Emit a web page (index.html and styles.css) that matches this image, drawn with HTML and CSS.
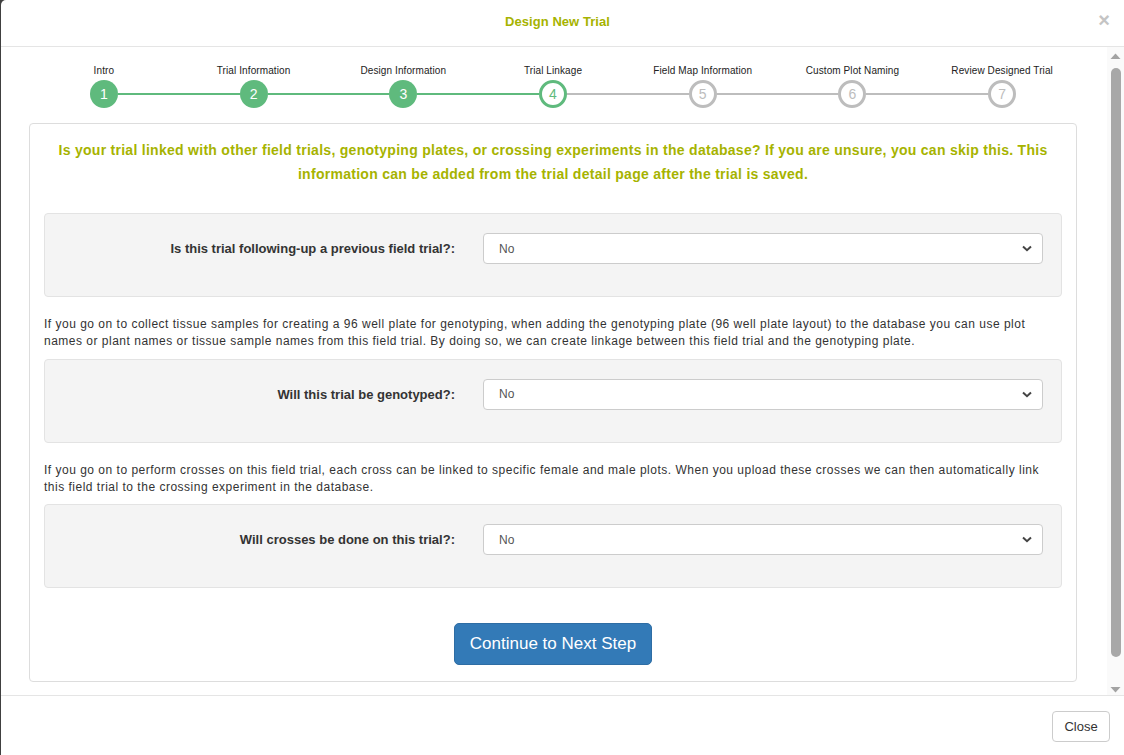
FILE: index.html
```html
<!DOCTYPE html>
<html>
<head>
<meta charset="utf-8">
<link rel="stylesheet" href="styles.css">
</head>
<body>
<div class="modal">
  <div class="modal-header">
    <div class="modal-title">Design New Trial</div>
    <span class="close-x">×</span>
  </div>
  <div class="modal-main">
    <div class="modal-body">
      <div class="stepper">
        <div class="step done"><div class="step-label">Intro</div><div class="step-track"><span class="ln ln-none"></span><span class="circle">1</span><span class="ln ln-green"></span></div></div>
        <div class="step done"><div class="step-label">Trial Information</div><div class="step-track"><span class="ln ln-green"></span><span class="circle">2</span><span class="ln ln-green"></span></div></div>
        <div class="step done"><div class="step-label">Design Information</div><div class="step-track"><span class="ln ln-green"></span><span class="circle">3</span><span class="ln ln-green"></span></div></div>
        <div class="step current"><div class="step-label">Trial Linkage</div><div class="step-track"><span class="ln ln-green"></span><span class="circle">4</span><span class="ln ln-grey"></span></div></div>
        <div class="step todo"><div class="step-label">Field Map Information</div><div class="step-track"><span class="ln ln-grey"></span><span class="circle">5</span><span class="ln ln-grey"></span></div></div>
        <div class="step todo"><div class="step-label">Custom Plot Naming</div><div class="step-track"><span class="ln ln-grey"></span><span class="circle">6</span><span class="ln ln-grey"></span></div></div>
        <div class="step todo"><div class="step-label">Review Designed Trial</div><div class="step-track"><span class="ln ln-grey"></span><span class="circle">7</span><span class="ln ln-none"></span></div></div>
      </div>

      <div class="panel">
        <p class="headline">Is your trial linked with other field trials, genotyping plates, or crossing experiments in the database? If you are unsure, you can skip this. This information can be added from the trial detail page after the trial is saved.</p>

        <div class="well">
          <label class="q-label">Is this trial following-up a previous field trial?:</label>
          <div class="select"><span>No</span><svg width="10" height="7" viewBox="0 0 10 7"><path d="M1 1.5 L5 5.2 L9 1.5" fill="none" stroke="#444" stroke-width="2"/></svg></div>
        </div>

        <p class="info">If you go on to collect tissue samples for creating a 96 well plate for genotyping, when adding the genotyping plate (96 well plate layout) to the database you can use plot names or plant names or tissue sample names from this field trial. By doing so, we can create linkage between this field trial and the genotyping plate.</p>

        <div class="well">
          <label class="q-label">Will this trial be genotyped?:</label>
          <div class="select"><span>No</span><svg width="10" height="7" viewBox="0 0 10 7"><path d="M1 1.5 L5 5.2 L9 1.5" fill="none" stroke="#444" stroke-width="2"/></svg></div>
        </div>

        <p class="info">If you go on to perform crosses on this field trial, each cross can be linked to specific female and male plots. When you upload these crosses we can then automatically link this field trial to the crossing experiment in the database.</p>

        <div class="well">
          <label class="q-label">Will crosses be done on this trial?:</label>
          <div class="select"><span>No</span><svg width="10" height="7" viewBox="0 0 10 7"><path d="M1 1.5 L5 5.2 L9 1.5" fill="none" stroke="#444" stroke-width="2"/></svg></div>
        </div>

        <div class="btn-row"><button class="btn-primary">Continue to Next Step</button></div>
      </div>
    </div>
    <div class="scrollbar">
      <svg class="arrow" width="17" height="14" viewBox="0 0 17 14"><path d="M3.5 10 L8.5 4.5 L13.5 10 Z" fill="#a3a3a3"/></svg>
      <div class="thumb-area"><div class="thumb"></div></div>
      <svg class="arrow" width="17" height="14" viewBox="0 0 17 14"><path d="M3.5 4 L8.5 9.5 L13.5 4 Z" fill="#a3a3a3"/></svg>
    </div>
  </div>
  <div class="modal-footer">
    <button class="btn-default">Close</button>
  </div>
</div>
</body>
</html>
```

FILE: styles.css
```css
html, body {
  margin: 0;
  padding: 0;
  height: 100%;
}
body {
  background: #404040;
  overflow: hidden;
  font-family: "Liberation Sans", Arial, sans-serif;
  color: #333;
}
.modal {
  margin-left: 1px;
  width: 1123px;
  height: 755px;
  background: #fff;
  border-top-left-radius: 5px;
  display: flex;
  flex-direction: column;
}
.modal-header {
  height: 46px;
  border-bottom: 1px solid #e5e5e5;
  display: flex;
  align-items: center;
  justify-content: center;
  position: relative;
  flex-shrink: 0;
  padding-right: 10px;
}
.modal-title {
  font-size: 13px;
  font-weight: bold;
  color: #a6b300;
  margin-top: -4px;
  letter-spacing: 0.05px;
}
.close-x {
  position: absolute;
  right: 14px;
  top: 10px;
  font-size: 20px;
  font-weight: bold;
  color: #c4c4c4;
  line-height: 20px;
}
.modal-main {
  height: 648px;
  display: flex;
  flex-shrink: 0;
}
.modal-body {
  width: 1106px;
  box-sizing: border-box;
  padding: 17px 30px 0 28px;
}
.scrollbar {
  width: 17px;
  background: #fafafa;
  display: flex;
  flex-direction: column;
  align-items: center;
}
.arrow {
  display: block;
  flex-shrink: 0;
}
.scrollbar .arrow:first-child {
  margin-top: 2px;
}
.scrollbar .arrow:last-child {
  margin-bottom: 3px;
}
.thumb-area {
  flex: 1;
  width: 100%;
  display: flex;
  justify-content: center;
  padding: 5px 0 26px;
  box-sizing: border-box;
}
.thumb {
  width: 10px;
  height: 589px;
  background: #a8a8a8;
  border-radius: 5px;
}

/* stepper */
.stepper {
  display: grid;
  grid-template-columns: repeat(7, 1fr);
  margin-bottom: 15px;
}
.step-label {
  font-size: 10px;
  line-height: 14px;
  text-align: center;
  color: #222;
  margin-bottom: 2px;
  letter-spacing: 0.1px;
}
.step-track {
  display: flex;
  align-items: center;
  height: 28px;
}
.ln {
  flex: 1;
  height: 2px;
}
.ln-green { background: #5fba7d; }
.ln-grey { background: #bdbdbd; }
.ln-none { background: transparent; }
.circle {
  width: 28px;
  height: 28px;
  box-sizing: border-box;
  border-radius: 50%;
  display: flex;
  align-items: center;
  justify-content: center;
  font-size: 14px;
  flex-shrink: 0;
}
.done .circle {
  background: #5fba7d;
  color: #fff;
}
.current .circle {
  background: #fff;
  border: 3px solid #5fba7d;
  color: #5fba7d;
}
.todo .circle {
  background: #fff;
  border: 3px solid #bdbdbd;
  color: #bdbdbd;
}

/* panel */
.panel {
  border: 1px solid #ddd;
  border-radius: 4px;
  padding: 14px 14px 16px;
}
.headline {
  margin: 0 0 27px;
  text-align: center;
  font-size: 14px;
  font-weight: bold;
  line-height: 24px;
  color: #a6b300;
  letter-spacing: 0.28px;
}
.well {
  background: #f4f4f4;
  border: 1px solid #e3e3e3;
  border-radius: 4px;
  padding: 19px 18px 32px;
  display: flex;
  align-items: center;
}
.q-label {
  width: 392px;
  text-align: right;
  font-size: 13px;
  font-weight: bold;
  color: #333;
  padding-right: 28px;
  flex-shrink: 0;
}
.select {
  flex: 1;
  height: 31px;
  box-sizing: border-box;
  background: #fff;
  border: 1px solid #ccc;
  border-radius: 4px;
  display: flex;
  align-items: center;
  justify-content: space-between;
  padding: 0 10px 0 15px;
  font-size: 12px;
  color: #555;
}
.info {
  margin: 19px 0 8.5px;
  font-size: 12px;
  line-height: 17px;
  color: #333;
  letter-spacing: 0.5px;
}
.btn-row {
  display: flex;
  justify-content: center;
  margin-top: 35px;
}
.btn-primary {
  font-family: "Liberation Sans", Arial, sans-serif;
  font-size: 17px;
  color: #fff;
  background: #337ab7;
  border: 1px solid #2e6da4;
  border-radius: 5px;
  height: 42px;
  width: 198px;
  padding: 0;
}
.modal-footer {
  flex: 1;
  border-top: 1px solid #e5e5e5;
  display: flex;
  justify-content: flex-end;
  align-items: flex-start;
  padding: 15px 14px 0 0;
}
.btn-default {
  font-family: "Liberation Sans", Arial, sans-serif;
  font-size: 13px;
  color: #333;
  background: #fff;
  border: 1px solid #ccc;
  border-radius: 4px;
  height: 31px;
  width: 58px;
  padding: 0;
}
```
